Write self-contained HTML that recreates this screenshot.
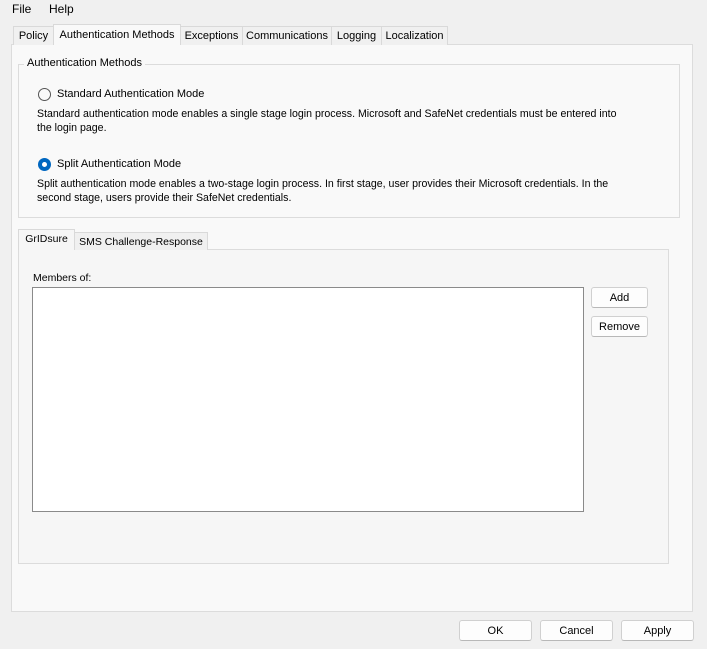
<!DOCTYPE html>
<html><head><style>
*{margin:0;padding:0;box-sizing:border-box}
body{width:707px;height:649px;background:#f0f0f0;font-family:"Liberation Sans",sans-serif;font-size:11.5px;color:#000;position:relative;overflow:hidden}
.a{position:absolute;white-space:nowrap}
.tab{position:absolute;top:26px;height:19px;border:1px solid #d9d9d9;border-bottom:none;background:#f0f0f0;text-align:center;line-height:19px;font-size:11px}
.btn{position:absolute;border:1px solid #d0d0d0;border-radius:3px;background:#fdfdfd;text-align:center;line-height:20px;border-bottom-color:#b8b8b8}
.rad{position:absolute;width:13px;height:13px;border-radius:50%;border:1px solid #555;background:#f9f9f9}
</style></head><body>
<div class="a" style="left:12px;top:2px;font-size:12px">File</div>
<div class="a" style="left:49px;top:2px;font-size:12px">Help</div>

<div class="a" style="left:11px;top:44px;width:682px;height:568px;background:#f9f9f9;border:1px solid #dcdcdc"></div>
<div class="tab" style="left:13px;width:41px">Policy</div>
<div class="tab" style="left:180px;width:63px">Exceptions</div>
<div class="tab" style="left:242px;width:90px">Communications</div>
<div class="tab" style="left:331px;width:51px">Logging</div>
<div class="tab" style="left:381px;width:67px">Localization</div>
<div class="tab" style="left:53px;top:24px;height:21px;width:128px;background:#f9f9f9;line-height:20px">Authentication Methods</div>

<div class="a" style="left:18px;top:64px;width:662px;height:154px;border:1px solid #dcdcdc"></div>
<div class="a" style="left:24px;top:57px;padding:0 3px;background:#f9f9f9;font-size:11px">Authentication Methods</div>
<div class="rad" style="left:38px;top:88px"></div>
<div class="a" style="left:57px;top:88px;font-size:11px">Standard Authentication Mode</div>
<div class="a" style="left:37px;top:107px;line-height:14px;font-size:10.6px">Standard authentication mode enables a single stage login process. Microsoft and SafeNet credentials must be entered into<br>the login page.</div>
<div class="rad" style="left:38px;top:158px;border:4px solid #0067c0;background:#fff"></div>
<div class="a" style="left:57px;top:158px;font-size:11px">Split Authentication Mode</div>
<div class="a" style="left:37px;top:177px;line-height:14px;font-size:10.6px">Split authentication mode enables a two-stage login process. In first stage, user provides their Microsoft credentials. In the<br>second stage, users provide their SafeNet credentials.</div>

<div class="a" style="left:18px;top:249px;width:651px;height:315px;background:#f6f6f6;border:1px solid #dcdcdc"></div>
<div class="tab" style="left:74px;top:232px;height:18px;width:134px;line-height:18px;font-size:10.5px">SMS Challenge-Response</div>
<div class="tab" style="left:18px;top:229px;height:21px;width:57px;background:#f6f6f6;font-size:10.5px">GrIDsure</div>
<div class="a" style="left:33px;top:272px;font-size:10.5px">Members of:</div>
<div class="a" style="left:32px;top:287px;width:552px;height:225px;background:#fff;border:1px solid #8a8a8a"></div>
<div class="btn" style="left:591px;top:287px;width:57px;height:21px;font-size:11px">Add</div>
<div class="btn" style="left:591px;top:316px;width:57px;height:21px;font-size:11px">Remove</div>

<div class="btn" style="left:459px;top:620px;width:73px;height:21px;font-size:11px">OK</div>
<div class="btn" style="left:540px;top:620px;width:73px;height:21px;font-size:11px">Cancel</div>
<div class="btn" style="left:621px;top:620px;width:73px;height:21px;font-size:11px">Apply</div>
</body></html>
